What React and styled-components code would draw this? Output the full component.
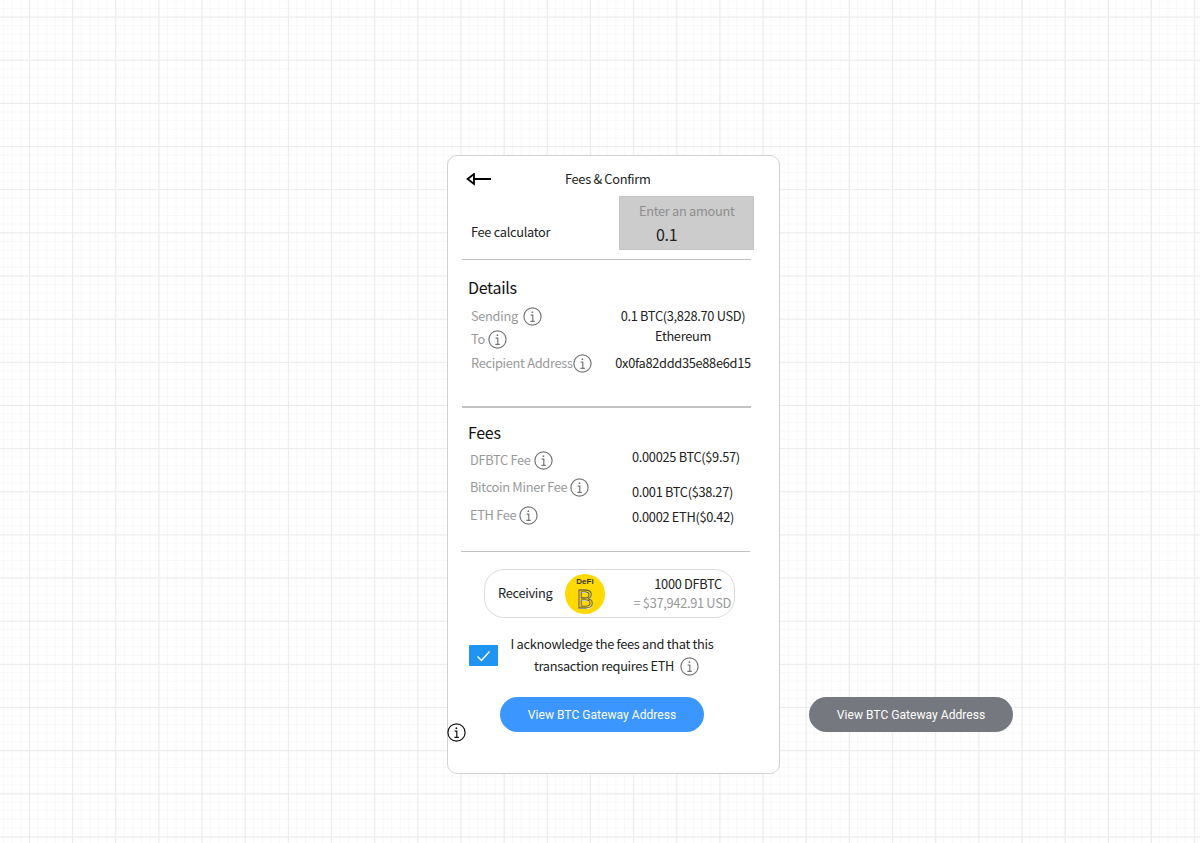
import React from "react";
import styled, { createGlobalStyle } from "styled-components";

const Global = createGlobalStyle`
  html, body { margin: 0; padding: 0; background: #fff; }
  * { box-sizing: border-box; }
`;

const minor = "#f8f8f8";
const major = "#ebebeb";

const Canvas = styled.div`
  width: 1200px;
  height: 843px;
  overflow: hidden;
  display: flex;
  align-items: flex-start;
  padding: 155px 0 0 447px;
  gap: 29px;
  font-family: "Noto Sans CJK KR", "Noto Sans", sans-serif;
  background-color: #fff;
  background-image:
    linear-gradient(to right, ${major} 1px, transparent 1px),
    linear-gradient(to bottom, ${major} 1px, transparent 1px),
    linear-gradient(to right, ${minor} 1px, transparent 1px),
    linear-gradient(to bottom, ${minor} 1px, transparent 1px);
  background-size: 43.16px 43.16px, 43.16px 43.16px, 8.632px 8.632px, 8.632px 8.632px;
  background-position: 29px 16.6px, 29px 16.6px, 3.1px 8px, 3.1px 8px;
`;

const Card = styled.section`
  position: relative;
  flex: none;
  width: 333px;
  height: 619px;
  background: #fff;
  border: 1px solid #d2d2d2;
  border-radius: 10px;
  color: #222;
  font-size: 12.8px;
  letter-spacing: -0.3px;
`;

const Header = styled.header`
  display: flex;
  align-items: center;
  gap: 73px;
  height: 24px;
  margin: 12px 0 0 18px;
`;

const Title = styled.h1`
  margin: -2px 0 0;
  font-size: 12.8px;
  font-weight: 400;
  line-height: 20px;
  color: #222;
`;

const FeeRow = styled.div`
  display: flex;
  justify-content: space-between;
  margin: 4px 25px 0 23px;
`;

const FeeLabel = styled.span`
  margin-top: 26px;
  line-height: 20px;
`;

const AmountBox = styled.div`
  width: 135px;
  height: 54px;
  padding-top: 4px;
  background: #cccccc;
  border: 1px solid #c4c4c4;
`;

const AmountHint = styled.div`
  padding-left: 19px;
  line-height: 20px;
  color: #8e8e8e;
`;

const AmountValue = styled.div`
  margin-top: 2px;
  padding-left: 36px;
  font-size: 16px;
  line-height: 22px;
  color: #222;
`;

const Divider = styled.hr`
  margin: ${(p) => p.$top}px 0 0 ${(p) => p.$left}px;
  width: 289px;
  height: ${(p) => p.$thick}px;
  border: 0;
  background: #c2c2c2;
`;

const Heading = styled.h2`
  margin: ${(p) => p.$top}px 0 0 20px;
  font-size: 16px;
  font-weight: 400;
  line-height: 24px;
  color: #111;
`;

const InfoBody = styled.div`
  display: flex;
  height: ${(p) => p.$height}px;
  margin-left: ${(p) => p.$left}px;
`;

const LabelColumn = styled.div`
  flex: none;
  width: ${(p) => p.$width}px;
  display: flex;
  flex-direction: column;
`;

const Label = styled.div`
  display: flex;
  align-items: center;
  gap: ${(p) => p.$gap ?? 5}px;
  height: 20px;
  margin-top: ${(p) => p.$top}px;
  line-height: 20px;
  color: #999;
  white-space: nowrap;
`;

const ValueColumn = styled.div`
  flex: none;
  width: ${(p) => p.$width}px;
  display: flex;
  flex-direction: column;
  text-align: ${(p) => p.$align};
`;

const Value = styled.div`
  height: 20px;
  margin-top: ${(p) => p.$top}px;
  line-height: 20px;
  color: #222;
  white-space: nowrap;
`;

const Receiving = styled.div`
  display: flex;
  align-items: center;
  width: 251px;
  height: 49px;
  margin: 17px 0 0 36px;
  padding: 0 3px 0 13px;
  border: 1px solid #dcdcdc;
  border-radius: 20px;
`;

const ReceivingLabel = styled.span`
  width: 67px;
  flex: none;
  margin-bottom: 2px;
`;

const Logo = styled.div`
  flex: none;
  width: 40px;
  height: 40px;
  border-radius: 50%;
  background: #ffd900;
  display: flex;
  flex-direction: column;
  align-items: center;
`;

const LogoSmall = styled.span`
  margin-top: 4px;
  font-family: "Liberation Sans", sans-serif;
  font-size: 8px;
  font-weight: 700;
  line-height: 8px;
  letter-spacing: 0;
  color: #333;
`;

const LogoLetter = styled.span`
  margin-top: 3px;
  font-family: "Liberation Sans", sans-serif;
  font-size: 25px;
  line-height: 20px;
  letter-spacing: 0;
  color: #ffd900;
  -webkit-text-stroke: 0.8px #4a4a4a;
  text-shadow: 0.6px 0.6px 0 #f4f4f4;
`;

const Amounts = styled.div`
  flex: 1;
  display: flex;
  flex-direction: column;
  align-items: flex-end;
  margin-bottom: 2px;
`;

const AmountPrimary = styled.span`
  margin-right: 9px;
  line-height: 19px;
`;

const AmountSecondary = styled.span`
  line-height: 19px;
  color: #999;
  white-space: nowrap;
`;

const Acknowledge = styled.div`
  display: flex;
  align-items: flex-start;
  margin: 15px 0 0 21px;
`;

const CheckBox = styled.span`
  flex: none;
  display: flex;
  align-items: center;
  justify-content: center;
  width: 29px;
  height: 21px;
  margin-top: 12px;
  background: #2094f3;
  border-radius: 1px;
`;

const AckText = styled.div`
  width: 228px;
  text-align: center;
  line-height: 22px;
  color: #222;
`;

const AckLine = styled.div`
  display: flex;
  align-items: center;
  justify-content: center;
  gap: 6px;
  padding-left: ${(p) => p.$indent ?? 0}px;
`;

const PillButton = styled.button`
  flex: none;
  display: block;
  width: 204px;
  height: 35px;
  padding: 0;
  border: 0;
  border-radius: 18px;
  background: ${(p) => p.$color};
  color: #fff;
  font-family: Roboto, sans-serif;
  font-size: 12.1px;
  font-weight: 400;
`;

const PrimaryWrap = styled.div`
  margin: 20px 0 0 52px;
`;

const SideButton = styled(PillButton)`
  margin-top: 542px;
`;

const CornerInfo = styled.span`
  position: absolute;
  left: -1px;
  top: 567px;
  display: flex;
`;

const Info = ({ color = "#777", size = 19 }) => (
  <svg width={size} height={size} viewBox="0 0 19 19" fill="none" stroke={color} style={{ flex: "none" }}>
    <circle cx="9.5" cy="9.5" r="8.6" strokeWidth="1.2" />
    <path d="M7.6 8.2h2.2v6M7.4 14.4h4.4" strokeWidth="1.2" />
    <circle cx="9.4" cy="5.2" r="0.9" fill={color} stroke="none" />
  </svg>
);

const BackArrow = () => (
  <svg width="26" height="14" viewBox="0 0 26 14" fill="none" stroke="#000" style={{ flex: "none" }}>
    <path d="M7 6h18" strokeWidth="2" />
    <path d="M8 1 1.6 6 8 11Z" strokeWidth="1.8" />
  </svg>
);

export default function App() {
  return (
    <>
      <Global />
      <Canvas>
        <Card>
          <Header>
            <BackArrow />
            <Title>Fees &amp; Confirm</Title>
          </Header>
          <FeeRow>
            <FeeLabel>Fee calculator</FeeLabel>
            <AmountBox>
              <AmountHint>Enter an amount</AmountHint>
              <AmountValue>0.1</AmountValue>
            </AmountBox>
          </FeeRow>
          <Divider $top={9} $left={14} $thick={1} />
          <Heading $top={15}>Details</Heading>
          <InfoBody $left={23} $height={107}>
            <LabelColumn $width={142}>
              <Label $top={7}>Sending <Info /></Label>
              <Label $top={3} $gap={3}>To <Info /></Label>
              <Label $top={4} $gap={0}>Recipient Address<Info /></Label>
            </LabelColumn>
            <ValueColumn $width={140} $align="center">
              <Value $top={7}>0.1 BTC(3,828.70 USD)</Value>
              <Value $top={0}>Ethereum</Value>
              <Value $top={7}>0x0fa82ddd35e88e6d15</Value>
            </ValueColumn>
          </InfoBody>
          <Divider $top={0} $left={14} $thick={2} />
          <Heading $top={12}>Fees</Heading>
          <InfoBody $left={22} $height={107}>
            <LabelColumn $width={162}>
              <Label $top={6} $gap={3}>DFBTC Fee <Info /></Label>
              <Label $top={7} $gap={3}>Bitcoin Miner Fee <Info /></Label>
              <Label $top={8} $gap={3}>ETH Fee <Info /></Label>
            </LabelColumn>
            <ValueColumn $width={130} $align="left">
              <Value $top={3}>0.00025 BTC($9.57)</Value>
              <Value $top={15}>0.001 BTC($38.27)</Value>
              <Value $top={5}>0.0002 ETH($0.42)</Value>
            </ValueColumn>
          </InfoBody>
          <Divider $top={0} $left={13} $thick={1} />
          <Receiving>
            <ReceivingLabel>Receiving</ReceivingLabel>
            <Logo>
              <LogoSmall>DeFi</LogoSmall>
              <LogoLetter>B</LogoLetter>
            </Logo>
            <Amounts>
              <AmountPrimary>1000 DFBTC</AmountPrimary>
              <AmountSecondary>= $37,942.91 USD</AmountSecondary>
            </Amounts>
          </Receiving>
          <Acknowledge>
            <CheckBox>
              <svg width="15" height="12" viewBox="0 0 15 12" fill="none" stroke="#fff" strokeWidth="1.4">
                <path d="M1.5 6.5 5.5 10.5 13.5 1.5" />
              </svg>
            </CheckBox>
            <AckText>
              <AckLine>I acknowledge the fees and that this</AckLine>
              <AckLine $indent={9}>transaction requires ETH <Info /></AckLine>
            </AckText>
          </Acknowledge>
          <PrimaryWrap>
            <PillButton $color="#3b97ff">View BTC Gateway Address</PillButton>
          </PrimaryWrap>
          <CornerInfo><Info color="#111" /></CornerInfo>
        </Card>
        <SideButton $color="#75787e">View BTC Gateway Address</SideButton>
      </Canvas>
    </>
  );
}
